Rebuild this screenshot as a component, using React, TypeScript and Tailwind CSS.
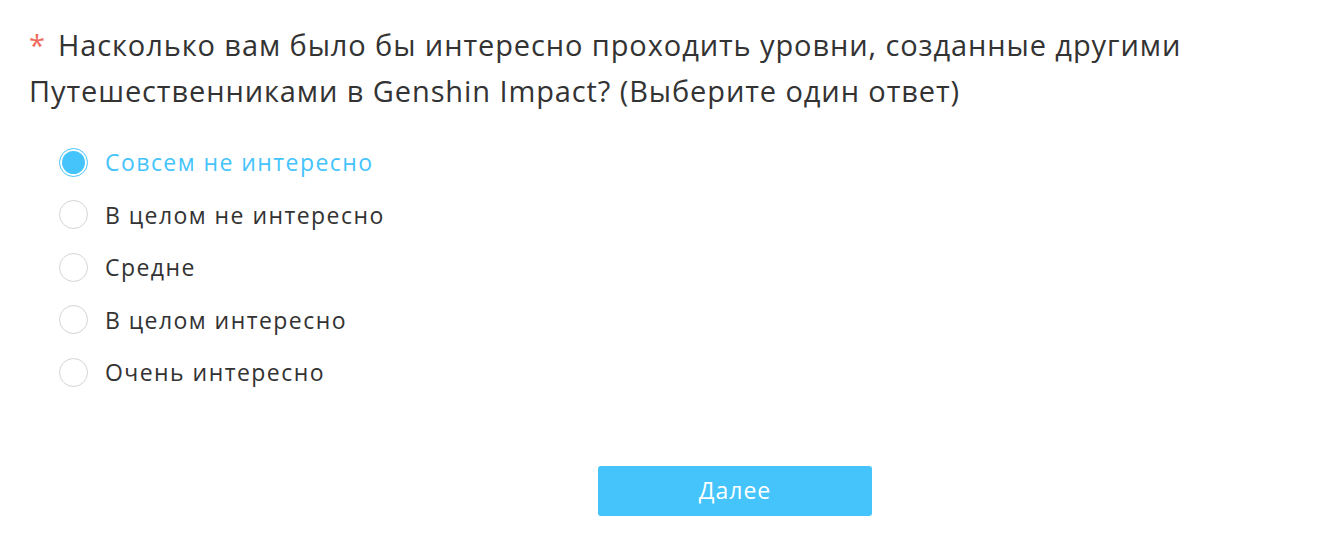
import React, { useState } from 'react';

const options = [
  'Совсем не интересно',
  'В целом не интересно',
  'Средне',
  'В целом интересно',
  'Очень интересно',
];

export default function App() {
  const [selected, setSelected] = useState(0);

  return (
    <main
      className="min-h-screen bg-white text-[#333333]"
      style={{ fontFamily: '"Open Sans", "Noto Sans", sans-serif' }}
    >
      <div className="pl-[29px] pt-[22px]">
        <h1 className="text-[29px] leading-[46px] font-normal tracking-[0.9px]">
          <span className="text-[#ef6a5c] mr-[12px]">*</span>
          Насколько вам было бы интересно проходить уровни, созданные другими
          <br />
          Путешественниками в Genshin Impact? (Выберите один ответ)
        </h1>

        <div className="mt-[22px] pl-[30px] flex flex-col">
          {options.map((opt, i) => {
            const active = i === selected;
            return (
              <button
                key={opt}
                onClick={() => setSelected(i)}
                className="flex items-center h-[52.5px] text-left"
              >
                <span
                  className={`w-[29px] h-[29px] rounded-full border flex items-center justify-center ${
                    active ? 'border-[#45c4fc]' : 'border-[#d4d4d4]'
                  }`}
                >
                  {active && <span className="w-[23px] h-[23px] rounded-full bg-[#45c4fc]" />}
                </span>
                <span
                  className={`ml-[17px] text-[23px] tracking-[1.45px] ${
                    active ? 'text-[#45c4fc]' : 'text-[#333333]'
                  }`}
                >
                  {opt}
                </span>
              </button>
            );
          })}
        </div>
      </div>

      <div className="mt-[67px] pl-[598px]">
        <button className="w-[274px] h-[50px] rounded-[3px] bg-[#45c4fc] text-white text-[23px] tracking-[1px]">
          Далее
        </button>
      </div>
    </main>
  );
}
